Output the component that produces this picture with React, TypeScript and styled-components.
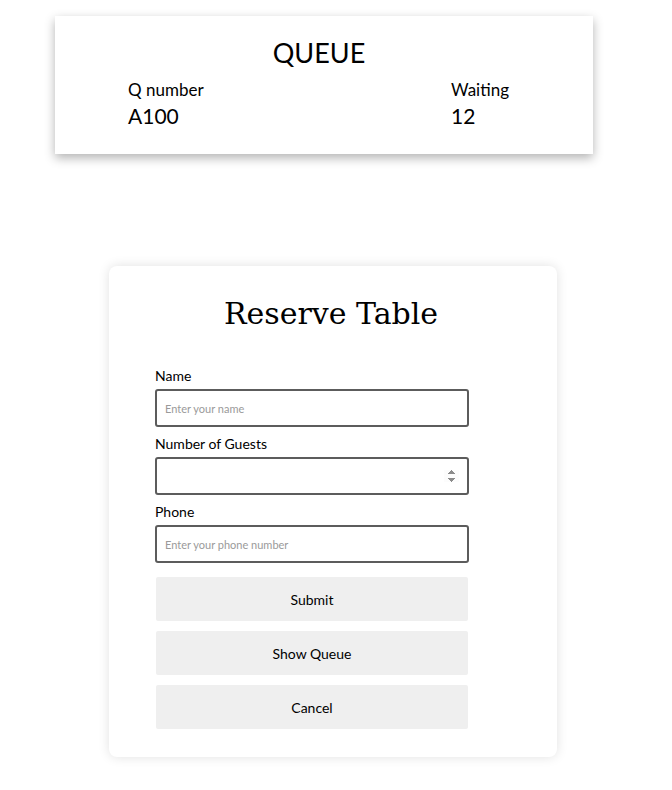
import React from "react";
import styled, { createGlobalStyle } from "styled-components";

const GlobalStyle = createGlobalStyle`
  body {
    margin: 0;
    background: #ffffff;
    font-family: Lato, "Noto Sans", sans-serif;
    color: #000;
  }
`;

const App = () => {
  return (
    <>
      <GlobalStyle />
      <Page>
        <QueueCard>
          <QueueTitle>QUEUE</QueueTitle>
          <QueueRow>
            <Stat>
              <StatLabel>Q number</StatLabel>
              <StatValue>A100</StatValue>
            </Stat>
            <Stat>
              <StatLabel>Waiting</StatLabel>
              <StatValue>12</StatValue>
            </Stat>
          </QueueRow>
        </QueueCard>

        <FormCard>
          <FormTitle>Reserve Table</FormTitle>
          <Form onSubmit={(e) => e.preventDefault()}>
            <Field>
              <Label>Name</Label>
              <Input type="text" placeholder="Enter your name" />
            </Field>
            <Field>
              <Label>Number of Guests</Label>
              <Input type="number" />
            </Field>
            <Field>
              <Label>Phone</Label>
              <Input type="tel" placeholder="Enter your phone number" />
            </Field>
            <Buttons>
              <Button type="submit">Submit</Button>
              <Button type="button">Show Queue</Button>
              <Button type="button">Cancel</Button>
            </Buttons>
          </Form>
        </FormCard>
      </Page>
    </>
  );
};

export default App;

const Page = styled.div`
  display: flex;
  flex-direction: column;
  padding: 16px 0 32px;
`;

const QueueCard = styled.div`
  width: 538px;
  height: 138px;
  box-sizing: border-box;
  margin-left: 55px;
  padding: 21px 73px 0;
  background: #fff;
  box-shadow: 0 4px 10px rgba(0, 0, 0, 0.3);
`;

const QueueTitle = styled.div`
  text-align: center;
  font-size: 27px;
  line-height: 32px;
  margin-right: 10px;
`;

const QueueRow = styled.div`
  display: grid;
  grid-template-columns: 323px auto;
  margin-top: 9px;
`;

const Stat = styled.div`
  display: flex;
  flex-direction: column;
`;

const StatLabel = styled.div`
  font-size: 17px;
  line-height: 24px;
`;

const StatValue = styled.div`
  font-size: 21px;
  line-height: 28px;
`;

const FormCard = styled.div`
  width: 448px;
  box-sizing: border-box;
  margin: 112px 0 0 109px;
  padding: 28px 46px 28px;
  background: #fff;
  border-radius: 8px;
  box-shadow: 0 0 12px rgba(0, 0, 0, 0.12);
`;

const FormTitle = styled.h1`
  margin: 0 0 33px;
  padding-right: 4px;
  text-align: center;
  font-family: "DejaVu Serif", serif;
  font-weight: normal;
  font-size: 30px;
  line-height: 40px;
`;

const Form = styled.form`
  display: flex;
  flex-direction: column;
  gap: 8px;
`;

const Field = styled.div`
  display: flex;
  flex-direction: column;
  gap: 4px;
`;

const Label = styled.label`
  font-size: 14px;
  line-height: 18px;
`;

const Input = styled.input`
  width: 314px;
  height: 38px;
  box-sizing: border-box;
  padding: 0 8px;
  border: 2px solid #5c5c5c;
  border-radius: 3px;
  font-family: Lato, "Noto Sans", sans-serif;
  font-size: 11px;
  &::placeholder {
    color: #9a9a9a;
  }
  &::-webkit-inner-spin-button {
    opacity: 1;
  }
`;

const Buttons = styled.div`
  display: flex;
  flex-direction: column;
  gap: 10px;
  margin-top: 6px;
  padding-left: 1px;
`;

const Button = styled.button`
  width: 312px;
  height: 44px;
  border: none;
  border-radius: 2px;
  background: #efefef;
  font-family: Lato, "Noto Sans", sans-serif;
  font-size: 14px;
  color: #000;
  cursor: pointer;
`;
